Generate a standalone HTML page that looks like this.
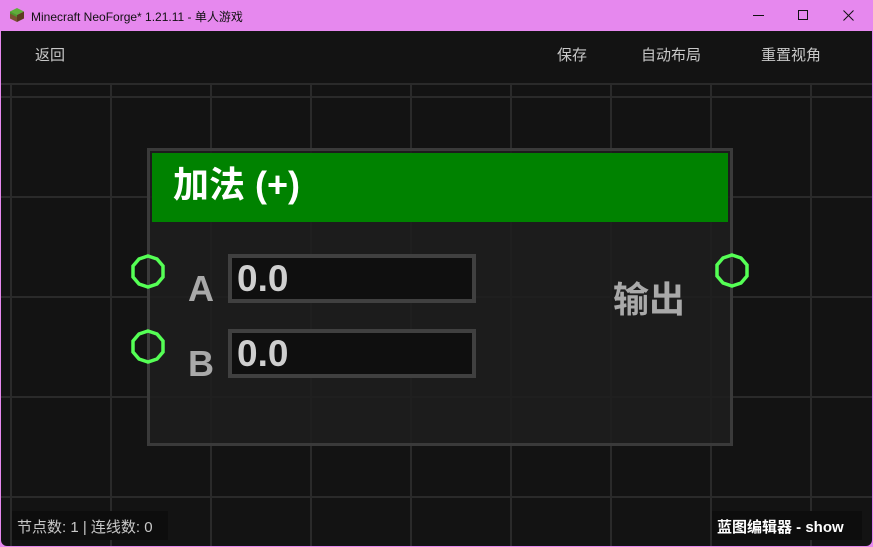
<!DOCTYPE html>
<html><head><meta charset="utf-8"><style>
*{margin:0;padding:0;box-sizing:border-box}
body{width:873px;height:547px;overflow:hidden;background:#e688ee;font-family:"Liberation Sans","Noto Sans CJK SC",sans-serif;position:relative}
#title{position:absolute;left:0;top:0;width:873px;height:31px;background:#e688ee;color:#111;font-size:12px}
#main{position:absolute;left:1px;top:31px;width:871px;height:515px;background:#131313;overflow:hidden;border-radius:0 0 6px 6px;
background-image:linear-gradient(#2a2a2a,#2a2a2a),linear-gradient(90deg,transparent 9px,#2a2a2a 9px,#2a2a2a 11px,transparent 11px),linear-gradient(transparent 65px,#2a2a2a 65px,#2a2a2a 67px,transparent 67px);
background-size:871px 2px,100px 515px,871px 100px;background-position:0 52px,0 53px,0 0;background-repeat:no-repeat,repeat-x,repeat-y}
.top{position:absolute;top:13px;color:#c8c8c8;font-size:15px}
.node{position:absolute;left:146px;top:117px;width:586px;height:298px;border:3px solid #3a3a3a;background:rgba(30,30,30,.9)}
.hdr{position:absolute;left:2px;top:2px;width:576px;height:69px;background:#008200;color:#fff;font-size:36px;font-weight:bold;padding:10px 0 0 21px;line-height:1.2}
.field{position:absolute;left:78px;width:248px;height:49px;border:4px solid #404040;background:#0f0f0f;color:#cfcfcf;font-size:37px;font-weight:bold;padding-left:5px;line-height:42px}
.lbl{position:absolute;color:#a9a9a9;font-size:36px;font-weight:bold}
.pin{position:absolute}
</style></head><body>
<div id="title">
<svg style="position:absolute;left:9px;top:7px" width="16" height="16" viewBox="0 0 16 16"><polygon points="8,1 15,4.5 8,8 1,4.5" fill="#5fae3a"/><polygon points="1,4.5 8,8 8,15 1,11.5" fill="#7a5232"/><polygon points="15,4.5 8,8 8,15 15,11.5" fill="#5c3c22"/><polygon points="1,4.5 8,8 8,10 1,6.5" fill="#4a9a2c"/></svg>
<span style="position:absolute;left:31px;top:8px">Minecraft NeoForge* 1.21.11 - 单人游戏</span>
<div style="position:absolute;left:753px;top:15px;width:11px;height:1px;background:#111"></div>
<div style="position:absolute;left:798px;top:10px;width:10px;height:10px;border:1px solid #111"></div>
<svg style="position:absolute;left:843px;top:10px" width="11" height="11"><path d="M0.5 0.5L10.5 10.5M10.5 0.5L0.5 10.5" stroke="#111" stroke-width="1"/></svg>
</div>
<div id="main">
<div class="top" style="left:34px">返回</div>
<div class="top" style="left:556px">保存</div>
<div class="top" style="left:640px">自动布局</div>
<div class="top" style="left:760px">重置视角</div>
<div class="node">
<div class="hdr">加法 (+)</div>
<div class="lbl" style="left:38px;top:117px">A</div>
<div class="lbl" style="left:38px;top:192px">B</div>
<div class="field" style="top:103px">0.0</div>
<div class="field" style="top:178px">0.0</div>
<div class="lbl" style="left:463px;top:120px">输出</div>
</div>
<svg class="pin" style="left:126px;top:221px" width="42" height="42"><polygon points="21,3 30,6 36,13 36,24 30,31 21,34 12,31 6,24 6,13 12,6" fill="none" stroke="#55ff55" stroke-width="3.5" transform="translate(0,1)"/></svg>
<svg class="pin" style="left:126px;top:296px" width="42" height="42"><polygon points="21,3 30,6 36,13 36,24 30,31 21,34 12,31 6,24 6,13 12,6" fill="none" stroke="#55ff55" stroke-width="3.5" transform="translate(0,1)"/></svg>
<svg class="pin" style="left:710px;top:220px" width="42" height="42"><polygon points="21,3 30,6 36,13 36,24 30,31 21,34 12,31 6,24 6,13 12,6" fill="none" stroke="#55ff55" stroke-width="3.5" transform="translate(0,1)"/></svg>
<div style="position:absolute;left:11px;top:480px;width:156px;height:29px;background:#0d0d0d;color:#c8c8c8;font-size:15px;padding:5px 0 0 5px">节点数: 1 | 连线数: 0</div>
<div style="position:absolute;left:711px;top:480px;width:150px;height:29px;background:#0d0d0d;color:#fff;font-size:15px;font-weight:bold;padding:5px 0 0 5px">蓝图编辑器 - show</div>
</div>
</body></html>
